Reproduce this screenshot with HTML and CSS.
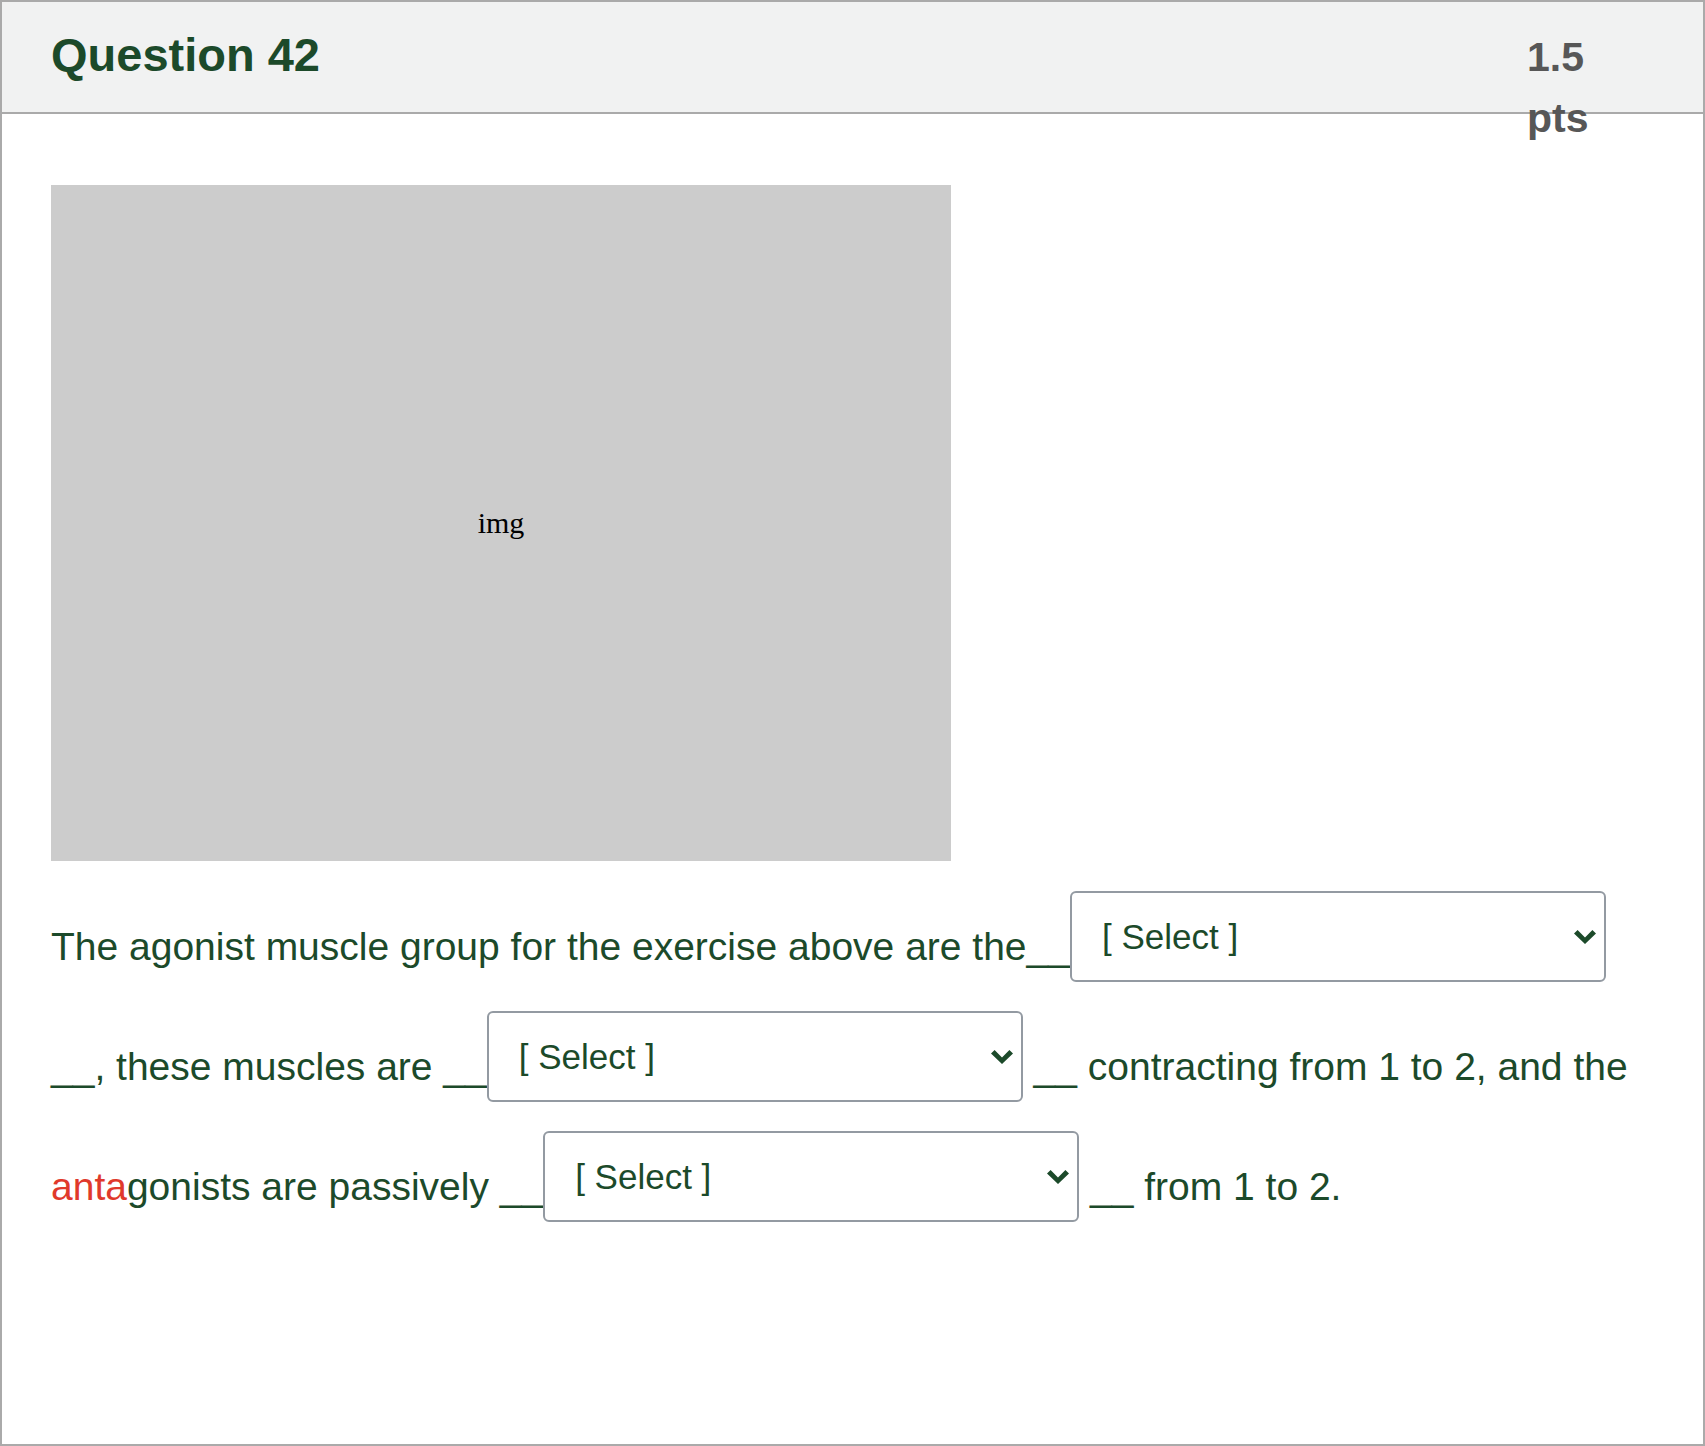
FILE: index.html
```html
<!DOCTYPE html>
<html lang="en">
<head>
<meta charset="utf-8">
<title>Question 42</title>
<link rel="stylesheet" href="styles.css">
</head>
<body>
<div class="card">
  <div class="header">
    <h2 class="title">Question 42</h2>
    <div class="points">1.5 pts</div>
  </div>
  <div class="content">
    <div class="img-ph"><span>img</span></div>
    <p class="text">The agonist muscle group for the exercise above are the__<span class="sel"><select aria-label="Answer 1"><option>[ Select ]</option></select><svg viewBox="0 0 22 14" preserveAspectRatio="none" aria-hidden="true"><polygon points="0,3.6 3.6,0 11,7.4 18.4,0 22,3.6 11,14"/></svg></span> __, these muscles are __<span class="sel"><select aria-label="Answer 2"><option>[ Select ]</option></select><svg viewBox="0 0 22 14" preserveAspectRatio="none" aria-hidden="true"><polygon points="0,3.6 3.6,0 11,7.4 18.4,0 22,3.6 11,14"/></svg></span> __ contracting from 1 to 2, and the <span class="red">anta</span>gonists are passively __<span class="sel"><select aria-label="Answer 3"><option>[ Select ]</option></select><svg viewBox="0 0 22 14" preserveAspectRatio="none" aria-hidden="true"><polygon points="0,3.6 3.6,0 11,7.4 18.4,0 22,3.6 11,14"/></svg></span> __ from 1 to 2.</p>
  </div>
</div>
</body>
</html>
```

FILE: styles.css
```css
* {
  box-sizing: border-box;
}

html,
body {
  margin: 0;
  padding: 0;
  background: #fff;
}

body {
  font-family: "Liberation Sans", Arial, sans-serif;
}

.card {
  min-height: 100vh;
  border: 2px solid #aaaaaa;
  background: #fff;
}

.header {
  display: flex;
  align-items: baseline;
  height: 112px;
  padding: 22px 110px 0 49px;
  background: #f1f2f2;
  border-bottom: 2px solid #aaaaaa;
}

.title {
  flex: 1;
  margin: 0;
  font-size: 47px;
  line-height: 62px;
  font-weight: bold;
  color: #1c4a2a;
}

.points {
  flex: none;
  width: 66px;
  font-size: 41px;
  line-height: 61px;
  font-weight: bold;
  color: #575757;
}

.content {
  padding: 71px 49px 0;
}

.img-ph {
  width: 900px;
  height: 676px;
  background: #cccccc;
  display: flex;
  align-items: center;
  justify-content: center;
  font-family: "Liberation Serif", "Times New Roman", serif;
  font-size: 30px;
  color: #000;
}

.text {
  margin: 26px 0 0;
  font-size: 39px;
  line-height: 120px;
  color: #1c4a2a;
}

.red {
  color: #e0392b;
}

.sel {
  position: relative;
  display: inline-block;
  vertical-align: 11px;
  font-size: 0;
  line-height: 0;
}

.sel select {
  -webkit-appearance: none;
  appearance: none;
  display: inline-block;
  vertical-align: baseline;
  width: 536px;
  height: 91px;
  margin: 0;
  padding: 0 50px 0 30px;
  border: 2px solid #939aa2;
  border-radius: 6px;
  background: #fff;
  font-family: "Liberation Sans", Arial, sans-serif;
  font-size: 35px;
  line-height: normal;
  color: #1c4a2a;
}

.sel svg {
  position: absolute;
  right: 10px;
  top: 39px;
  width: 22px;
  height: 14px;
  fill: #1c4a2a;
  pointer-events: none;
}
```
